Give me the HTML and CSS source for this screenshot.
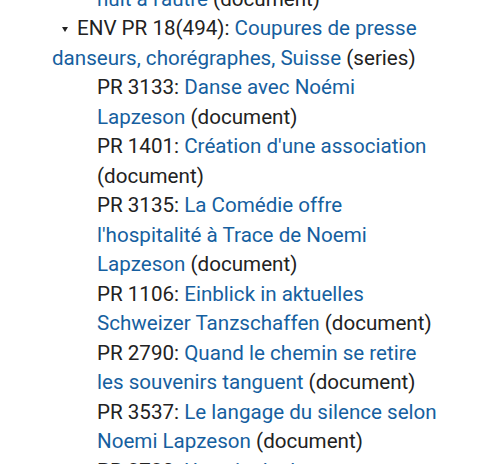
FILE: index.html
```html
<!DOCTYPE html>
<html lang="fr">
<head>
<meta charset="utf-8">
<title>Arborescence</title>
<link rel="stylesheet" href="styles.css">
</head>
<body>
<div class="tree">
  <details open class="series">
    <summary><span class="caret"></span>ENV PR 17(493): <a href="#">Coupures de presse danse</a> (series)</summary>
    <ul class="docs">
      <li>PR 3093: <a href="#">Noemi Lapzeson, d'une<br>nuit à l'autre</a> (document)</li>
    </ul>
  </details>
  <details open class="series">
    <summary><span class="caret"></span>ENV PR 18(494): <a href="#">Coupures de presse danseurs, chorégraphes, Suisse</a> (series)</summary>
    <ul class="docs">
      <li>PR 3133: <a href="#">Danse avec Noémi Lapzeson</a> (document)</li>
      <li>PR 1401: <a href="#">Création d'une association</a> (document)</li>
      <li>PR 3135: <a href="#">La Comédie offre l'hospitalité à Trace de Noemi Lapzeson</a> (document)</li>
      <li>PR 1106: <a href="#">Einblick in aktuelles Schweizer Tanzschaffen</a> (document)</li>
      <li>PR 2790: <a href="#">Quand le chemin se retire les souvenirs tanguent</a> (document)</li>
      <li>PR 3537: <a href="#">Le langage du silence selon Noemi Lapzeson</a> (document)</li>
      <li>PR 3730: <a href="#">Une vie de danse</a> (document)</li>
    </ul>
  </details>
</div>
</body>
</html>
```

FILE: styles.css
```css
html, body {
  margin: 0;
  background: #fff;
}
body {
  padding: 0 8px;
  overflow: hidden;
}
.tree {
  font-family: Roboto, "Liberation Sans", sans-serif;
  font-size: 20.6px;
  line-height: 29.5px;
  color: #222;
  padding: 0 30px 0 44px;
  margin-top: -104px;
}
.tree a {
  color: #165fa0;
  text-decoration: none;
}
.series summary {
  display: block;
  list-style: none;
  text-indent: 10px;
  cursor: pointer;
}
.series summary::-webkit-details-marker {
  display: none;
}
.caret {
  display: inline-block;
  width: 0;
  height: 0;
  border-left: 3px solid transparent;
  border-right: 3px solid transparent;
  border-top: 5px solid #222;
  margin-right: 9px;
  vertical-align: 3px;
  text-indent: 0;
}
.docs {
  list-style: none;
  margin: 0;
  padding: 0 0 0 45px;
}
```
